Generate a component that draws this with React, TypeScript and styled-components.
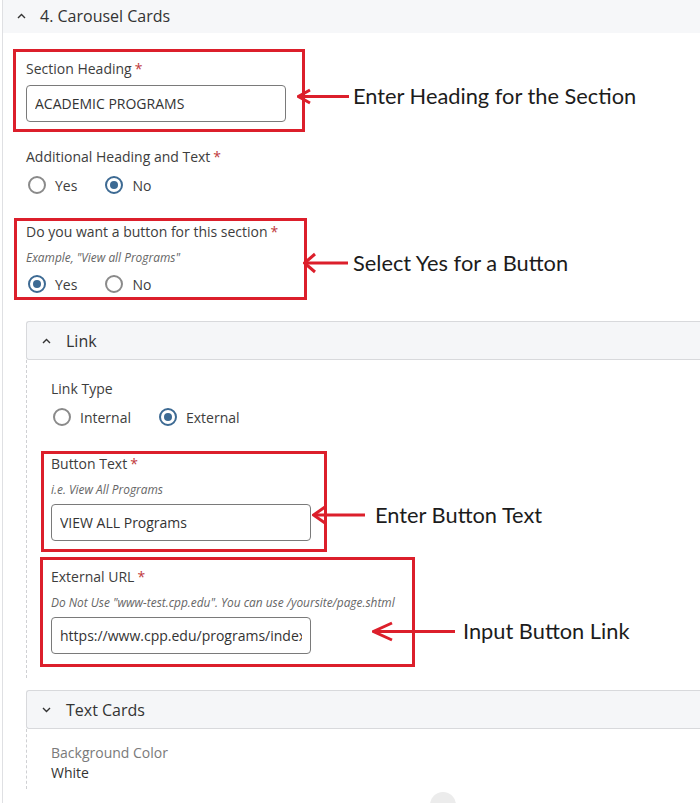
import React from 'react';
import styled, { createGlobalStyle } from 'styled-components';

const GlobalStyle = createGlobalStyle`
  html, body { margin: 0; padding: 0; background: #ffffff; }
  body {
    font-family: "Open Sans", "Noto Sans", sans-serif;
    color: #333333;
    overflow: hidden;
  }
  * { box-sizing: border-box; }
`;

const Page = styled.div`
  position: relative;
  width: 698px;
  height: 803px;
  margin-left: 2px;
  border-left: 1px solid #dfe0e3;
  overflow: hidden;
`;

const SectionHeader = styled.div`
  height: 33px;
  background: #f6f7f9;
  display: flex;
  align-items: center;
  gap: 14px;
  padding: 0 0 2px 14px;
  font-size: 16px;
  line-height: 22px;
  color: #333;
`;

const SectionBody = styled.div`
  display: flex;
  flex-direction: column;
  align-items: flex-start;
  padding: 16px 0 0 23px;
`;

const RedBox = styled.div<{ $w: number; $pad: string; $mt: number; $ml: number }>`
  position: relative;
  width: ${(p) => p.$w}px;
  margin-top: ${(p) => p.$mt}px;
  margin-left: ${(p) => p.$ml}px;
  padding: ${(p) => p.$pad};
  border: 3px solid #dc1f2b;
  display: flex;
  flex-direction: column;
  align-items: flex-start;
`;

const Field = styled.div<{ $mt: number }>`
  margin-top: ${(p) => p.$mt}px;
  display: flex;
  flex-direction: column;
  align-items: flex-start;
`;

const Label = styled.div<{ $muted?: boolean }>`
  font-size: 14px;
  line-height: 20px;
  color: ${(p) => (p.$muted ? '#7a7a7a' : '#3d3d3d')};
  white-space: nowrap;
`;

const Value = styled.div`
  font-size: 14px;
  line-height: 20px;
  color: #333;
`;

const Req = styled.span`
  color: #c0393b;
  margin-left: 3px;
`;

const Hint = styled.div`
  margin-top: 6px;
  font-size: 11.9px;
  line-height: 18px;
  font-style: italic;
  color: #666;
  white-space: nowrap;
`;

const TextInput = styled.input`
  margin-top: 6px;
  width: 260px;
  height: 37px;
  padding: 0 8px;
  border: 1px solid #7a7a7a;
  border-radius: 4px;
  font-family: "Open Sans", "Noto Sans", sans-serif;
  font-size: 14px;
  color: #333;
  background: #fff;
  outline: none;
`;

const RadioRow = styled.div`
  margin-top: 6px;
  height: 24px;
  display: flex;
  align-items: center;
  gap: 26px;
`;

const RadioOption = styled.label`
  display: inline-flex;
  align-items: center;
  gap: 9px;
  font-size: 14px;
  color: #3d3d3d;
`;

const RadioCircle = styled.span<{ $checked?: boolean }>`
  width: 18px;
  height: 18px;
  margin-left: 2px;
  border-radius: 50%;
  border: 2px solid ${(p) => (p.$checked ? '#3d6a93' : '#8a8a8a')};
  display: inline-flex;
  align-items: center;
  justify-content: center;
  &::after {
    content: '';
    width: 8px;
    height: 8px;
    border-radius: 50%;
    background: ${(p) => (p.$checked ? '#3d6a93' : 'transparent')};
  }
`;

const NestedHeader = styled.div<{ $mt: number }>`
  align-self: stretch;
  margin-top: ${(p) => p.$mt}px;
  height: 39px;
  display: flex;
  align-items: center;
  gap: 15px;
  padding-left: 15px;
  background: #f5f6f8;
  border: 1px solid #d8d9dc;
  border-right: none;
  border-radius: 3px 0 0 3px;
  font-size: 16px;
  color: #333;
`;

const NestedBody = styled.div<{ $pt: number; $pb: number }>`
  align-self: stretch;
  display: flex;
  flex-direction: column;
  align-items: flex-start;
  padding: ${(p) => p.$pt}px 0 ${(p) => p.$pb}px 24px;
  border-left: 1px dashed #cfd0d3;
`;

const Annotation = styled.div<{ $x: number; $y: number; $gap: number }>`
  position: absolute;
  left: ${(p) => p.$x}px;
  top: ${(p) => p.$y}px;
  transform: translateY(-50%);
  display: flex;
  align-items: center;
  gap: ${(p) => p.$gap}px;
  white-space: nowrap;
  font-family: Lato, "Open Sans", sans-serif;
  font-size: 21.8px;
  line-height: 26px;
  color: #1c1c1c;
`;

const ScrollButton = styled.div`
  position: absolute;
  left: 427px;
  top: 792px;
  width: 26px;
  height: 26px;
  border-radius: 50%;
  background: #ececec;
`;

const Chevron: React.FC<{ down?: boolean }> = ({ down }) => (
  <svg width="9" height="6" viewBox="0 0 9 6" style={{ flex: 'none' }}>
    <polyline
      points={down ? '1,1 4.5,4.5 8,1' : '1,5 4.5,1.5 8,5'}
      fill="none"
      stroke="#333"
      strokeWidth="1.4"
    />
  </svg>
);

const Arrow: React.FC<{ len: number; headLen: number; headHalf: number }> = ({ len, headLen, headHalf }) => {
  const h = headHalf * 2 + 4;
  const cy = h / 2;
  return (
    <svg width={len} height={h} viewBox={`0 0 ${len} ${h}`} style={{ flex: 'none' }}>
      <line x1="2" y1={cy} x2={len} y2={cy} stroke="#dc1f2b" strokeWidth="3" />
      <polyline
        points={`${headLen},${cy - headHalf} 1.5,${cy} ${headLen},${cy + headHalf}`}
        fill="none"
        stroke="#dc1f2b"
        strokeWidth="3"
      />
    </svg>
  );
};

const Radio: React.FC<{ label: string; checked?: boolean }> = ({ label, checked }) => (
  <RadioOption>
    <RadioCircle $checked={checked} />
    {label}
  </RadioOption>
);

export default function App() {
  return (
    <>
      <GlobalStyle />
      <Page>
        <SectionHeader>
          <Chevron />
          4. Carousel Cards
        </SectionHeader>
        <SectionBody>
          <RedBox $w={292} $pad="7px 16px 7px 10px" $mt={0} $ml={-13}>
            <Label>
              Section Heading<Req>*</Req>
            </Label>
            <TextInput readOnly value="ACADEMIC PROGRAMS" />
            <Annotation $x={281} $y={44} $gap={4}>
              <Arrow len={52} headLen={13} headHalf={6.5} />
              Enter Heading for the Section
            </Annotation>
          </RedBox>

          <Field $mt={15}>
            <Label>
              Additional Heading and Text<Req>*</Req>
            </Label>
            <RadioRow>
              <Radio label="Yes" />
              <Radio label="No" checked />
            </RadioRow>
          </Field>

          <RedBox $w={293} $pad="1px 10px 1px 9px" $mt={21} $ml={-12}>
            <Label>
              Do you want a button for this section<Req>*</Req>
            </Label>
            <Hint>Example, "View all Programs"</Hint>
            <RadioRow>
              <Radio label="Yes" checked />
              <Radio label="No" />
            </RadioRow>
            <Annotation $x={286} $y={42} $gap={5}>
              <Arrow len={45} headLen={12} headHalf={9} />
              Select Yes for a Button
            </Annotation>
          </RedBox>

          <NestedHeader $mt={21}>
            <Chevron />
            Link
          </NestedHeader>
          <NestedBody $pt={19} $pb={11}>
            <Label>Link Type</Label>
            <RadioRow>
              <Radio label="Internal" />
              <Radio label="External" checked />
            </RadioRow>

            <RedBox $w={286} $pad="0 12px 8px 7px" $mt={22} $ml={-10}>
              <Label>
                Button Text<Req>*</Req>
              </Label>
              <Hint>i.e. View All Programs</Hint>
              <TextInput readOnly value="VIEW ALL Programs" />
              <Annotation $x={268} $y={61} $gap={10}>
                <Arrow len={53} headLen={13} headHalf={8} />
                Enter Button Text
              </Annotation>
            </RedBox>

            <RedBox $w={375} $pad="7px 10px 10px 8px" $mt={5} $ml={-11}>
              <Label>
                External URL<Req>*</Req>
              </Label>
              <Hint>Do Not Use "www-test.cpp.edu". You can use /yoursite/page.shtml</Hint>
              <TextInput readOnly value="https://www.cpp.edu/programs/index.shtml" />
              <Annotation $x={329} $y={71} $gap={8}>
                <Arrow len={83} headLen={20} headHalf={8.5} />
                Input Button Link
              </Annotation>
            </RedBox>
          </NestedBody>

          <NestedHeader $mt={12}>
            <Chevron down />
            Text Cards
          </NestedHeader>
          <NestedBody $pt={14} $pb={6}>
            <Label $muted>Background Color</Label>
            <Value>White</Value>
          </NestedBody>
        </SectionBody>
        <ScrollButton />
      </Page>
    </>
  );
}
